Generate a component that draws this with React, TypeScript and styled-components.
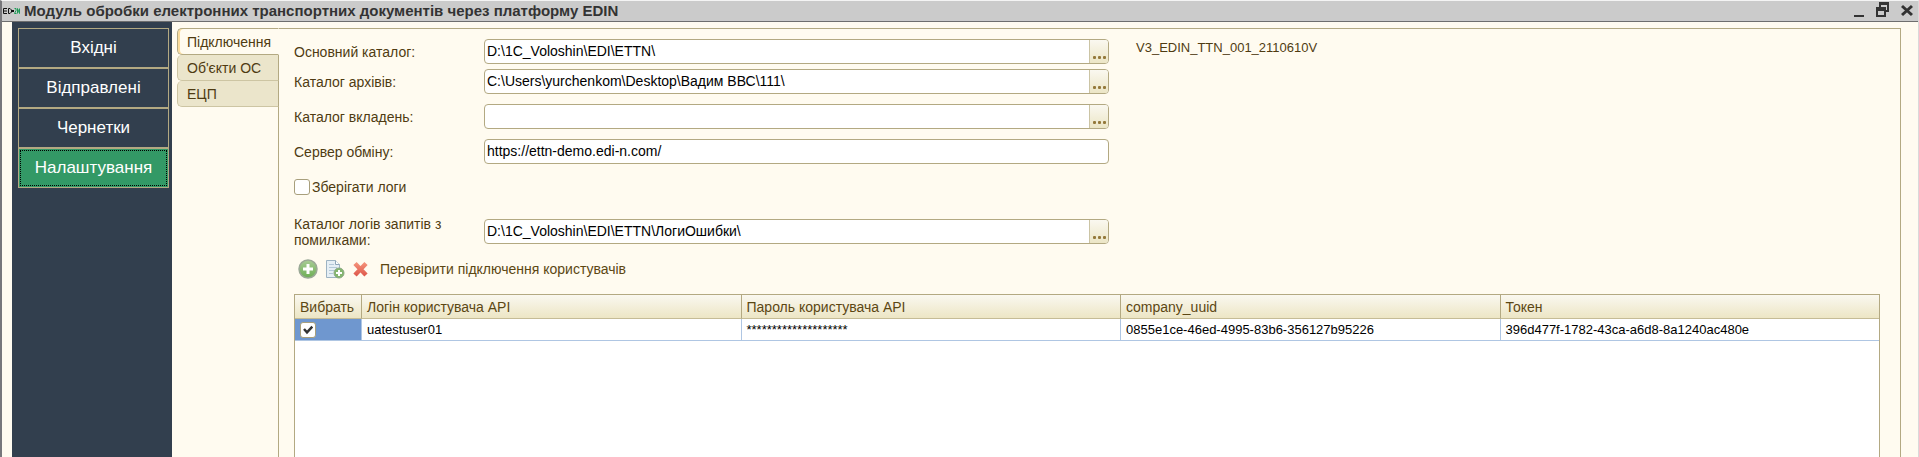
import React, { useState } from 'react';
import styled, { createGlobalStyle, css } from 'styled-components';

const line = '#b3a982';
const cream = '#fffbf0';
const brown = '#4f3b12';

const GlobalStyle = createGlobalStyle`
  *, *::before, *::after { box-sizing: border-box; }
  body { margin: 0; background: ${cream}; }
  body, button, input { font-family: "Liberation Sans", Arial, sans-serif; font-size: 14px; }
  button { cursor: pointer; }
`;

const Window = styled.div`
  display: flex;
  flex-direction: column;
  min-height: 100vh;
  background: ${cream};
  border-left: 2px solid #77777b;
  border-right: 1px solid #d9d9d9;
  border-top: 1px solid #f4f4f4;
  color: ${brown};
`;

const TitleBar = styled.header`
  display: flex;
  align-items: center;
  gap: 4px;
  height: 21px;
  padding: 0 5px 0 1px;
  background: #cbcbcb;
  border-bottom: 1px solid #6e6e6e;
`;

const Title = styled.h1`
  flex: 1;
  margin: 0;
  font-size: 15px;
  line-height: 20px;
  font-weight: 700;
  color: #333;
  white-space: nowrap;
`;

const WindowControls = styled.div`
  display: flex;
  gap: 12px;
`;

const WindowButton = styled.button`
  display: flex;
  padding: 0;
  border: 0;
  background: none;
`;

const Body = styled.div`
  flex: 1;
  display: flex;
  padding: 0 17px 0 10px;
`;

const Sidebar = styled.nav`
  flex: none;
  display: flex;
  flex-direction: column;
  width: 160px;
  padding: 6px 3px 0 6px;
  background: #323f4e;
`;

const NavButton = styled.button<{ $active?: boolean }>`
  height: 40px;
  padding: 0;
  border: 1px solid ${line};
  background: ${p => (p.$active ? '#339966' : '#323f4e')};
  color: #fff;
  font-size: 17px;
  outline: ${p => (p.$active ? '1px dotted #000' : 'none')};
  outline-offset: -3px;
`;

const Tabs = styled.div`
  flex: none;
  display: flex;
  flex-direction: column;
  width: 102px;
  margin: 6px -1px 0 5px;
`;

const Tab = styled.button<{ $active?: boolean }>`
  position: relative;
  height: 26px;
  padding: 0 0 0 9px;
  text-align: left;
  color: ${brown};
  background: #ebe5cb;
  border: 1px solid #cdc5a3;
  border-top-width: 0;
  border-right-color: ${line};
  border-radius: 5px 0 0 5px;
  ${p => p.$active && css`
    height: 27px;
    background: ${cream};
    border-color: ${line};
    border-top-width: 1px;
    border-right-color: ${cream};
    box-shadow: inset 2px 0 0 #fbdc9c;
  `}
`;

const Panel = styled.main`
  flex: 1;
  min-width: 0;
  display: flex;
  flex-direction: column;
  margin-top: 6px;
  padding: 10px 20px 0 15px;
  border: solid ${line};
  border-width: 1px 1px 0 1px;
`;

const Top = styled.div`
  display: flex;
  gap: 27px;
`;

const Form = styled.form`
  flex: 0 1 815px;
  display: flex;
  flex-direction: column;
  gap: 10px;
`;

const Group = styled.div`
  display: flex;
  flex-direction: column;
  gap: 5px;
`;

const Row = styled.div`
  display: flex;
  align-items: center;
  height: 25px;
`;

const Label = styled.label`
  flex: none;
  width: 190px;
  padding-right: 30px;
  line-height: 16px;
`;

const Field = styled.div`
  flex: 1;
  display: flex;
  height: 25px;
  background: #fff;
  border: 1px solid ${line};
  border-radius: 4px;
  overflow: hidden;
`;

const TextInput = styled.input`
  flex: 1;
  min-width: 0;
  padding: 0 2px 2px;
  border: 0;
  outline: 0;
  background: none;
  color: #000;
`;

const BrowseButton = styled.button`
  display: flex;
  align-items: flex-end;
  justify-content: center;
  width: 19px;
  padding: 0 0 4px;
  border: 0;
  border-left: 1px solid #cbc4a4;
  background: linear-gradient(#faf8f0, #ece6c6);
`;

const CheckInput = styled.input`
  appearance: none;
  flex: none;
  width: 16px;
  height: 16px;
  margin: 0;
  background: #fff;
  border: 1px solid #a89f7c;
  border-radius: 3px;
  &:checked {
    background: #fff url("data:image/svg+xml,%3Csvg xmlns='http://www.w3.org/2000/svg' viewBox='0 0 14 14'%3E%3Cpath d='M3 6l3 3.4L11.300 3.600' fill='none' stroke='%23333' stroke-width='2.400'/%3E%3C/svg%3E") center / 14px 14px no-repeat;
  }
`;

const CheckRow = styled(Row)`
  gap: 2px;
  margin-bottom: 10px;
`;

const Version = styled.div`
  font-size: 13px;
  line-height: 18px;
`;

const Toolbar = styled.div`
  display: flex;
  align-items: center;
  gap: 7px;
  height: 26px;
  margin: 12px 0;
  padding-left: 4px;
`;

const ToolButton = styled.button`
  display: flex;
  align-items: center;
  padding: 0;
  border: 0;
  background: none;
  color: #5c4713;
`;

const CheckUsersButton = styled(ToolButton)`
  margin-left: 4px;
`;

const Grid = styled.div`
  flex: 1;
  background: #fff;
  border: 1px solid ${line};
  border-bottom: 0;
`;

const Table = styled.table`
  width: 100%;
  table-layout: fixed;
  border-collapse: separate;
  border-spacing: 0;
`;

const HeadCell = styled.th<{ $narrow?: boolean }>`
  width: ${p => (p.$narrow ? '66px' : 'auto')};
  height: 24px;
  padding: 0 5px;
  text-align: left;
  font-weight: 400;
  color: #5c4713;
  white-space: nowrap;
  border-bottom: 1px solid #c5bc96;
  & + & { border-left: 1px solid ${line}; }
`;

const HeadRow = styled.tr`
  background: linear-gradient(#faf8f0, #ece5c3);
`;

const Cell = styled.td<{ $selected?: boolean }>`
  height: 22px;
  padding: 0 5px;
  font-size: 13px;
  color: #000;
  background: ${p => (p.$selected ? '#6f97cf' : '#fff')};
  border-bottom: 1px solid #afc6e3;
  & + & { border-left: 1px solid #afc6e3; }
  ${CheckInput} { display: block; }
`;

const Logo = () => (
  <svg width="17" height="6" viewBox="0 0 17 6" aria-label="EDIN">
    <path d="M4 .5H.5v5H4M.5 3H4M5.500 .5v5h1.500l1.500-1.500V2L7 .5z" fill="none" stroke="#111" />
    <path d="M9 3h2" stroke="#111" strokeWidth="2" />
    <path d="M11.500 .5h1.500v2l-1.500 3h2M14.500 5.500v-5l2 5v-5" stroke="#1f9a57" fill="none" />
  </svg>
);

const Dots = () => (
  <svg width="13" height="3" viewBox="0 0 13 3" fill="#94793a">
    <rect width="3" height="3" rx="1" /><rect x="5" width="3" height="3" rx="1" /><rect x="10" width="3" height="3" rx="1" />
  </svg>
);

const PlusIcon = () => (
  <svg width="20" height="20" viewBox="0 0 20 20">
    <defs>
      <linearGradient id="plus" x2="0" y2="1"><stop stopColor="#a9cc97" /><stop offset="1" stopColor="#6cae53" /></linearGradient>
    </defs>
    <circle cx="10" cy="10" r="9" fill="url(#plus)" stroke="#9aa896" strokeWidth="1.500" />
    <path d="M10 5v10M5 10h10" stroke="#fff" strokeWidth="3" />
  </svg>
);

const CopyIcon = () => (
  <svg width="20" height="20" viewBox="0 0 20 20">
    <path d="M1.500 1.500h9l4 4v13h-13z" fill="#e6eff5" stroke="#9db3c3" />
    <path d="M10.500 1.500v4h4" fill="#fff" stroke="#8fa6b8" />
    <path d="M4 5.500h5M4 8.500h8M4 11.500h5M4 14.500h4" stroke="#b4c8d8" />
    <circle cx="14" cy="14" r="5" fill="#83b66e" stroke="#8ca884" />
    <path d="M14 11v6M11 14h6" stroke="#fff" strokeWidth="2" />
  </svg>
);

const DeleteIcon = () => (
  <svg width="17" height="16" viewBox="0 0 17 16">
    <defs>
      <linearGradient id="del" gradientUnits="userSpaceOnUse" x1="0" y1="0" x2="0" y2="16"><stop stopColor="#f79a80" /><stop offset="1" stopColor="#dc5348" /></linearGradient>
    </defs>
    <path d="M3 2.500l11 11.500M14 2.500L3 14" stroke="url(#del)" strokeWidth="4.500" />
  </svg>
);

const navItems = ['Вхідні', 'Відправлені', 'Чернетки', 'Налаштування'];
const tabItems = ['Підключення', "Об'єкти ОС", 'ЕЦП'];

type PathFieldProps = { id: string; label: string; value: string; browse?: boolean };

const PathField = ({ id, label, value, browse = true }: PathFieldProps) => (
  <Row>
    <Label htmlFor={id}>{label}</Label>
    <Field>
      <TextInput id={id} defaultValue={value} spellCheck={false} />
      {browse && <BrowseButton type="button" aria-label="Вибрати"><Dots /></BrowseButton>}
    </Field>
  </Row>
);

export default function App() {
  const [nav, setNav] = useState(3);
  const [tab, setTab] = useState(0);
  return (
    <>
      <GlobalStyle />
      <Window>
        <TitleBar>
          <Logo />
          <Title>Модуль обробки електронних транспортних документів через платформу EDIN</Title>
          <WindowControls>
            <WindowButton aria-label="Згорнути">
              <svg width="10" height="18" viewBox="0 0 10 18"><path d="M0 14h10" stroke="#333" strokeWidth="2" /></svg>
            </WindowButton>
            <WindowButton aria-label="Відновити">
              <svg width="13" height="18" viewBox="0 0 13 18" fill="#333" fillRule="evenodd">
                <path d="M3 0h10v10h-3V8h1V3H5v2H3z" />
                <path d="M0 5h10v10H0zM2 9v4h6V9z" />
              </svg>
            </WindowButton>
            <WindowButton aria-label="Закрити">
              <svg width="12" height="18" viewBox="0 0 12 18"><path d="M1 4l10 9M11 4L1 13" stroke="#333" strokeWidth="3" /></svg>
            </WindowButton>
          </WindowControls>
        </TitleBar>
        <Body>
          <Sidebar>
            {navItems.map((item, i) => (
              <NavButton key={item} $active={i === nav} onClick={() => setNav(i)}>{item}</NavButton>
            ))}
          </Sidebar>
          <Tabs role="tablist">
            {tabItems.map((item, i) => (
              <Tab key={item} role="tab" aria-selected={i === tab} $active={i === tab} onClick={() => setTab(i)}>{item}</Tab>
            ))}
          </Tabs>
          <Panel>
            <Top>
              <Form>
                <Group>
                  <PathField id="main" label="Основний каталог:" value="D:\1C_Voloshin\EDI\ETTN\" />
                  <PathField id="archive" label="Каталог архівів:" value="C:\Users\yurchenkom\Desktop\Вадим ВВС\111\" />
                </Group>
                <PathField id="attach" label="Каталог вкладень:" value="" />
                <PathField id="server" label="Сервер обміну:" value="https://ettn-demo.edi-n.com/" browse={false} />
                <CheckRow>
                  <CheckInput type="checkbox" id="logs" />
                  <label htmlFor="logs">Зберігати логи</label>
                </CheckRow>
                <PathField id="errors" label="Каталог логів запитів з помилками:" value="D:\1C_Voloshin\EDI\ETTN\ЛогиОшибки\" />
              </Form>
              <Version>V3_EDIN_TTN_001_2110610V</Version>
            </Top>
            <Toolbar>
              <ToolButton aria-label="Додати"><PlusIcon /></ToolButton>
              <ToolButton aria-label="Додати копіюванням"><CopyIcon /></ToolButton>
              <ToolButton aria-label="Видалити"><DeleteIcon /></ToolButton>
              <CheckUsersButton>Перевірити підключення користувачів</CheckUsersButton>
            </Toolbar>
            <Grid>
              <Table>
                <thead>
                  <HeadRow>
                    <HeadCell $narrow>Вибрать</HeadCell>
                    <HeadCell>Логін користувача API</HeadCell>
                    <HeadCell>Пароль користувача API</HeadCell>
                    <HeadCell>company_uuid</HeadCell>
                    <HeadCell>Токен</HeadCell>
                  </HeadRow>
                </thead>
                <tbody>
                  <tr>
                    <Cell $selected><CheckInput type="checkbox" defaultChecked aria-label="Вибрать" /></Cell>
                    <Cell>uatestuser01</Cell>
                    <Cell>********************</Cell>
                    <Cell>0855e1ce-46ed-4995-83b6-356127b95226</Cell>
                    <Cell>396d477f-1782-43ca-a6d8-8a1240ac480e</Cell>
                  </tr>
                </tbody>
              </Table>
            </Grid>
          </Panel>
        </Body>
      </Window>
    </>
  );
}
